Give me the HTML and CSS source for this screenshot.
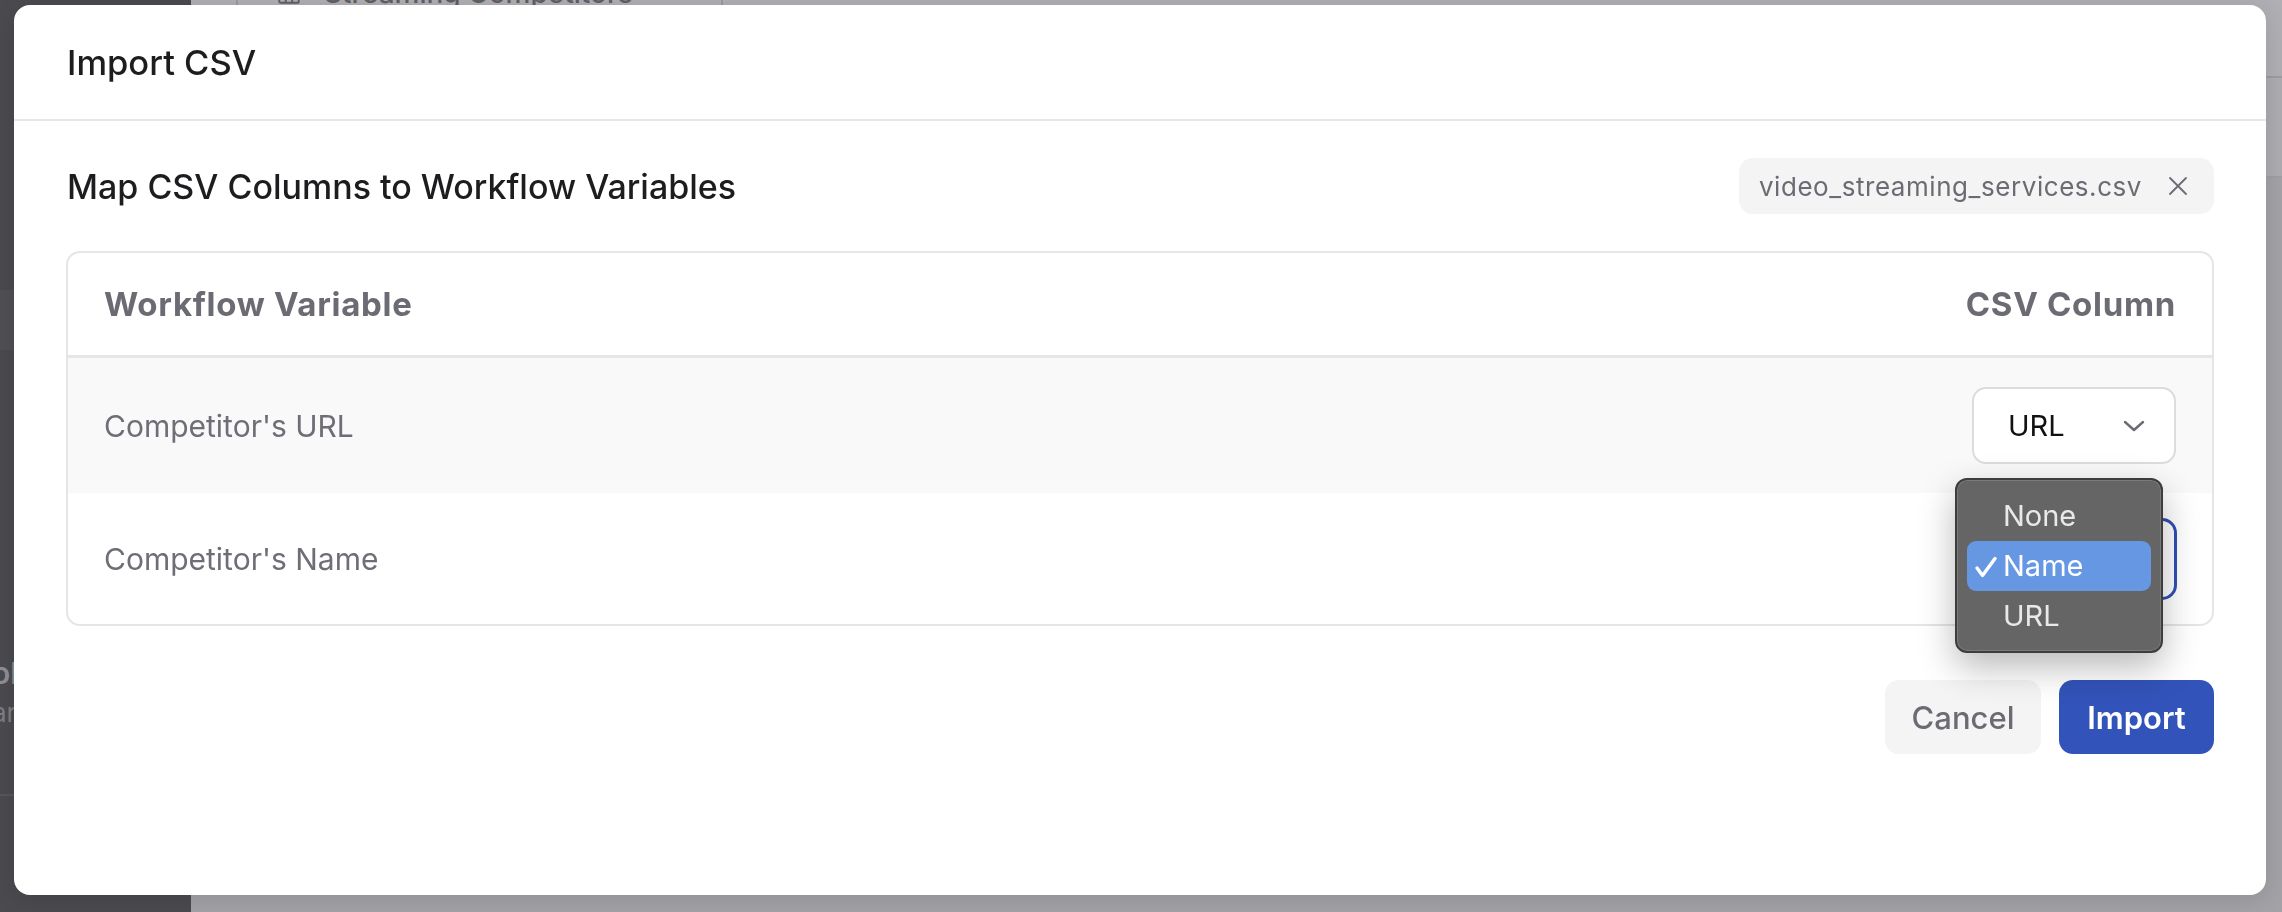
FILE: index.html
```html
<!DOCTYPE html>
<html lang="en">

<head>
    <meta charset="UTF-8">
    <meta name="viewport" content="width=device-width, initial-scale=1.0">
    <title>Import CSV</title>
    <link rel="stylesheet" href="styles.css">
</head>

<body>
    <div class="app">
        <aside class="sidebar">
            <div class="side-band"></div>
            <div class="side-item">
                <p class="side-title">olders</p>
                <p class="side-sub">ar</p>
            </div>
        </aside>
        <main class="main">
            <div class="topbar">
                <div class="tab">
                    <svg width="26" height="26" viewBox="0 0 16 16" fill="none" stroke="currentColor" stroke-width="1.2">
                        <rect x="2" y="2" width="12" height="12" rx="1" />
                        <path d="M2 6h12M2 10h12M6 2v12M10 2v12" />
                    </svg>
                    <span>Streaming Competitors</span>
                    <svg width="16" height="16" viewBox="0 0 16 16" fill="none" stroke="currentColor" stroke-width="2">
                        <path d="M4 6l4 4 4-4" />
                    </svg>
                </div>
            </div>
            <div class="toolbar"></div>
        </main>
    </div>

    <div class="overlay">
        <div class="modal">
            <div class="modal-header">
                <h1>Import CSV</h1>
            </div>
            <div class="modal-body">
                <div class="map-row">
                    <h2>Map CSV Columns to Workflow Variables</h2>
                    <div class="chip">
                        <span>video_streaming_services.csv</span>
                        <svg width="20" height="20" viewBox="0 0 20 20" fill="none" stroke="currentColor" stroke-width="1.8" stroke-linecap="round">
                            <path d="M2 2l16 16M18 2L2 18" />
                        </svg>
                    </div>
                </div>

                <div class="card">
                    <div class="card-head">
                        <span>Workflow Variable</span>
                        <span>CSV Column</span>
                    </div>
                    <div class="card-row shaded">
                        <span>Competitor's URL</span>
                        <div class="select">
                            <span>URL</span>
                            <svg width="22" height="12" viewBox="0 0 22 12" fill="none" stroke="currentColor" stroke-width="2.4" stroke-linecap="round" stroke-linejoin="round">
                                <path d="M2 2l9 8 9-8" />
                            </svg>
                        </div>
                    </div>
                    <div class="card-row last">
                        <span>Competitor's Name</span>
                        <div class="select focused">
                            <span>Name</span>
                            <svg width="22" height="12" viewBox="0 0 22 12" fill="none" stroke="currentColor" stroke-width="2.4" stroke-linecap="round" stroke-linejoin="round">
                                <path d="M2 2l9 8 9-8" />
                            </svg>
                            <ul class="popup">
                                <li>None</li>
                                <li class="picked">
                                    <svg class="check" width="24" height="22" viewBox="0 0 24 22" fill="none" stroke="currentColor" stroke-width="3.4" stroke-linecap="round" stroke-linejoin="round">
                                        <path d="M3 12l5.5 7.5L21 2.5" />
                                    </svg>Name
                                </li>
                                <li>URL</li>
                            </ul>
                        </div>
                    </div>
                </div>

                <div class="actions">
                    <button class="btn cancel">Cancel</button>
                    <button class="btn import">Import</button>
                </div>
            </div>
        </div>
    </div>
</body>

</html>
```

FILE: styles.css
```css
* {
    box-sizing: border-box;
}

body {
    margin: 0;
    width: 2282px;
    height: 912px;
    overflow: hidden;
    font-family: "Inter", "Noto Sans", sans-serif;
    background-color: #a6a6aa;
}

/* page behind the dimmed overlay */
.app {
    display: flex;
    height: 100%;
}

.sidebar {
    width: 191px;
    height: 100%;
    background-color: #4a4a4f;
    display: flex;
    flex-direction: column;
}

.side-band {
    margin-top: 290px;
    height: 60px;
    background-color: #4f4f54;
}

.side-item {
    margin-top: 305px;
    padding-bottom: 66px;
    border-bottom: 2px solid #56565b;
}

.side-title {
    margin: 0 0 0 -8px;
    font-size: 30px;
    font-weight: 600;
    color: #8e8e94;
}

.side-sub {
    margin: 6px 0 0 -8px;
    font-size: 26px;
    color: #7d7d83;
}

.main {
    flex: 1;
    background-color: #a3a3a7;
}

.topbar {
    height: 78px;
    background-color: #b0b0b4;
    border-bottom: 2px solid #9d9da1;
    padding-left: 45px;
}

.tab {
    width: 487px;
    height: 100%;
    border-left: 2px solid #9b9b9f;
    border-right: 2px solid #9b9b9f;
    display: flex;
    align-items: flex-start;
    gap: 22px;
    padding-left: 38px;
    color: #606066;
}

.tab svg {
    margin-top: -20px;
}

.tab span {
    margin-top: -24px;
    font-size: 28px;
    font-weight: 500;
    line-height: 34px;
    white-space: nowrap;
}

.toolbar {
    height: 100px;
    background-color: #adadb1;
    border-bottom: 2px solid #9f9fa3;
}

/* modal */
.overlay {
    position: fixed;
    top: 0;
    left: 0;
    width: 100%;
    height: 100%;
    padding: 5px 16px 17px 14px;
}

.modal {
    width: 100%;
    height: 100%;
    background-color: #ffffff;
    border-radius: 16px;
    box-shadow: 0 4px 24px rgba(0, 0, 0, 0.12);
}

.modal-header {
    height: 116px;
    padding: 0 53px;
    display: flex;
    align-items: center;
    border-bottom: 2px solid #e7e7e9;
}

h1 {
    margin: 0;
    font-size: 34.5px;
    font-weight: 500;
    color: #1d1d20;
}

.modal-body {
    padding: 37px 52px 0;
}

.map-row {
    height: 56px;
    display: flex;
    align-items: center;
    justify-content: space-between;
}

h2 {
    margin: 0 0 0 1px;
    font-size: 34px;
    font-weight: 500;
    color: #1d1d20;
}

.chip {
    height: 56px;
    display: flex;
    align-items: center;
    gap: 26px;
    padding: 0 26px 0 20px;
    background-color: #f4f4f5;
    border-radius: 14px;
    color: #6b6b73;
    font-size: 26px;
    letter-spacing: 0.55px;
}

.card {
    margin-top: 37px;
    border: 2px solid #e5e5e8;
    border-radius: 14px;
}

.card-head {
    height: 105px;
    padding: 0 36px;
    display: flex;
    align-items: center;
    justify-content: space-between;
    border-bottom: 3px solid #e6e6e9;
    font-size: 33px;
    font-weight: 700;
    letter-spacing: 0.7px;
    color: #6b6b73;
}

.card-row {
    height: 135px;
    padding: 0 36px;
    display: flex;
    align-items: center;
    justify-content: space-between;
    font-size: 30px;
    color: #6e6e76;
}

.card-row.shaded {
    background-color: #f9f9fa;
}

.card-row.last {
    height: 131px;
}

.select {
    position: relative;
    width: 204px;
    height: 77px;
    padding: 0 29px 0 34px;
    display: flex;
    align-items: center;
    justify-content: space-between;
    background-color: #ffffff;
    border: 2px solid #dcdcdf;
    border-radius: 14px;
    font-size: 29px;
    color: #111111;
}

.select svg {
    color: #6b6b73;
}

.select.focused {
    height: 80px;
    border-color: #2f4fb5;
    box-shadow: 0 0 0 1px #2f4fb5;
}

/* native select menu, open */
.popup {
    position: absolute;
    top: -43px;
    left: -19px;
    width: 208px;
    margin: 0;
    padding: 11px 10px 10px;
    list-style: none;
    background-color: #656565;
    border: 2px solid #3d3d3d;
    border-radius: 12px;
    box-shadow: 0 14px 36px rgba(0, 0, 0, 0.28), inset 0 0 0 1px #7a7a7a;
    z-index: 5;
}

.popup li {
    position: relative;
    height: 50px;
    display: flex;
    align-items: center;
    padding-left: 36px;
    border-radius: 9px;
    font-size: 29px;
    color: #e9e9e9;
}

.popup li.picked {
    background-color: #6597e3;
    color: #ffffff;
}

.popup li.picked .check {
    position: absolute;
    left: 7px;
    top: 15px;
    color: #ffffff;
}

.actions {
    margin-top: 54px;
    display: flex;
    justify-content: flex-end;
    gap: 18px;
}

.btn {
    height: 74px;
    padding: 0;
    border: none;
    border-radius: 14px;
    font-family: inherit;
    font-size: 31px;
    font-weight: 500;
}

.cancel {
    width: 156px;
    background-color: #f4f4f5;
    color: #6b6b73;
}

.import {
    width: 155px;
    background-color: #3253b9;
    color: #ffffff;
    font-weight: 600;
}
```
